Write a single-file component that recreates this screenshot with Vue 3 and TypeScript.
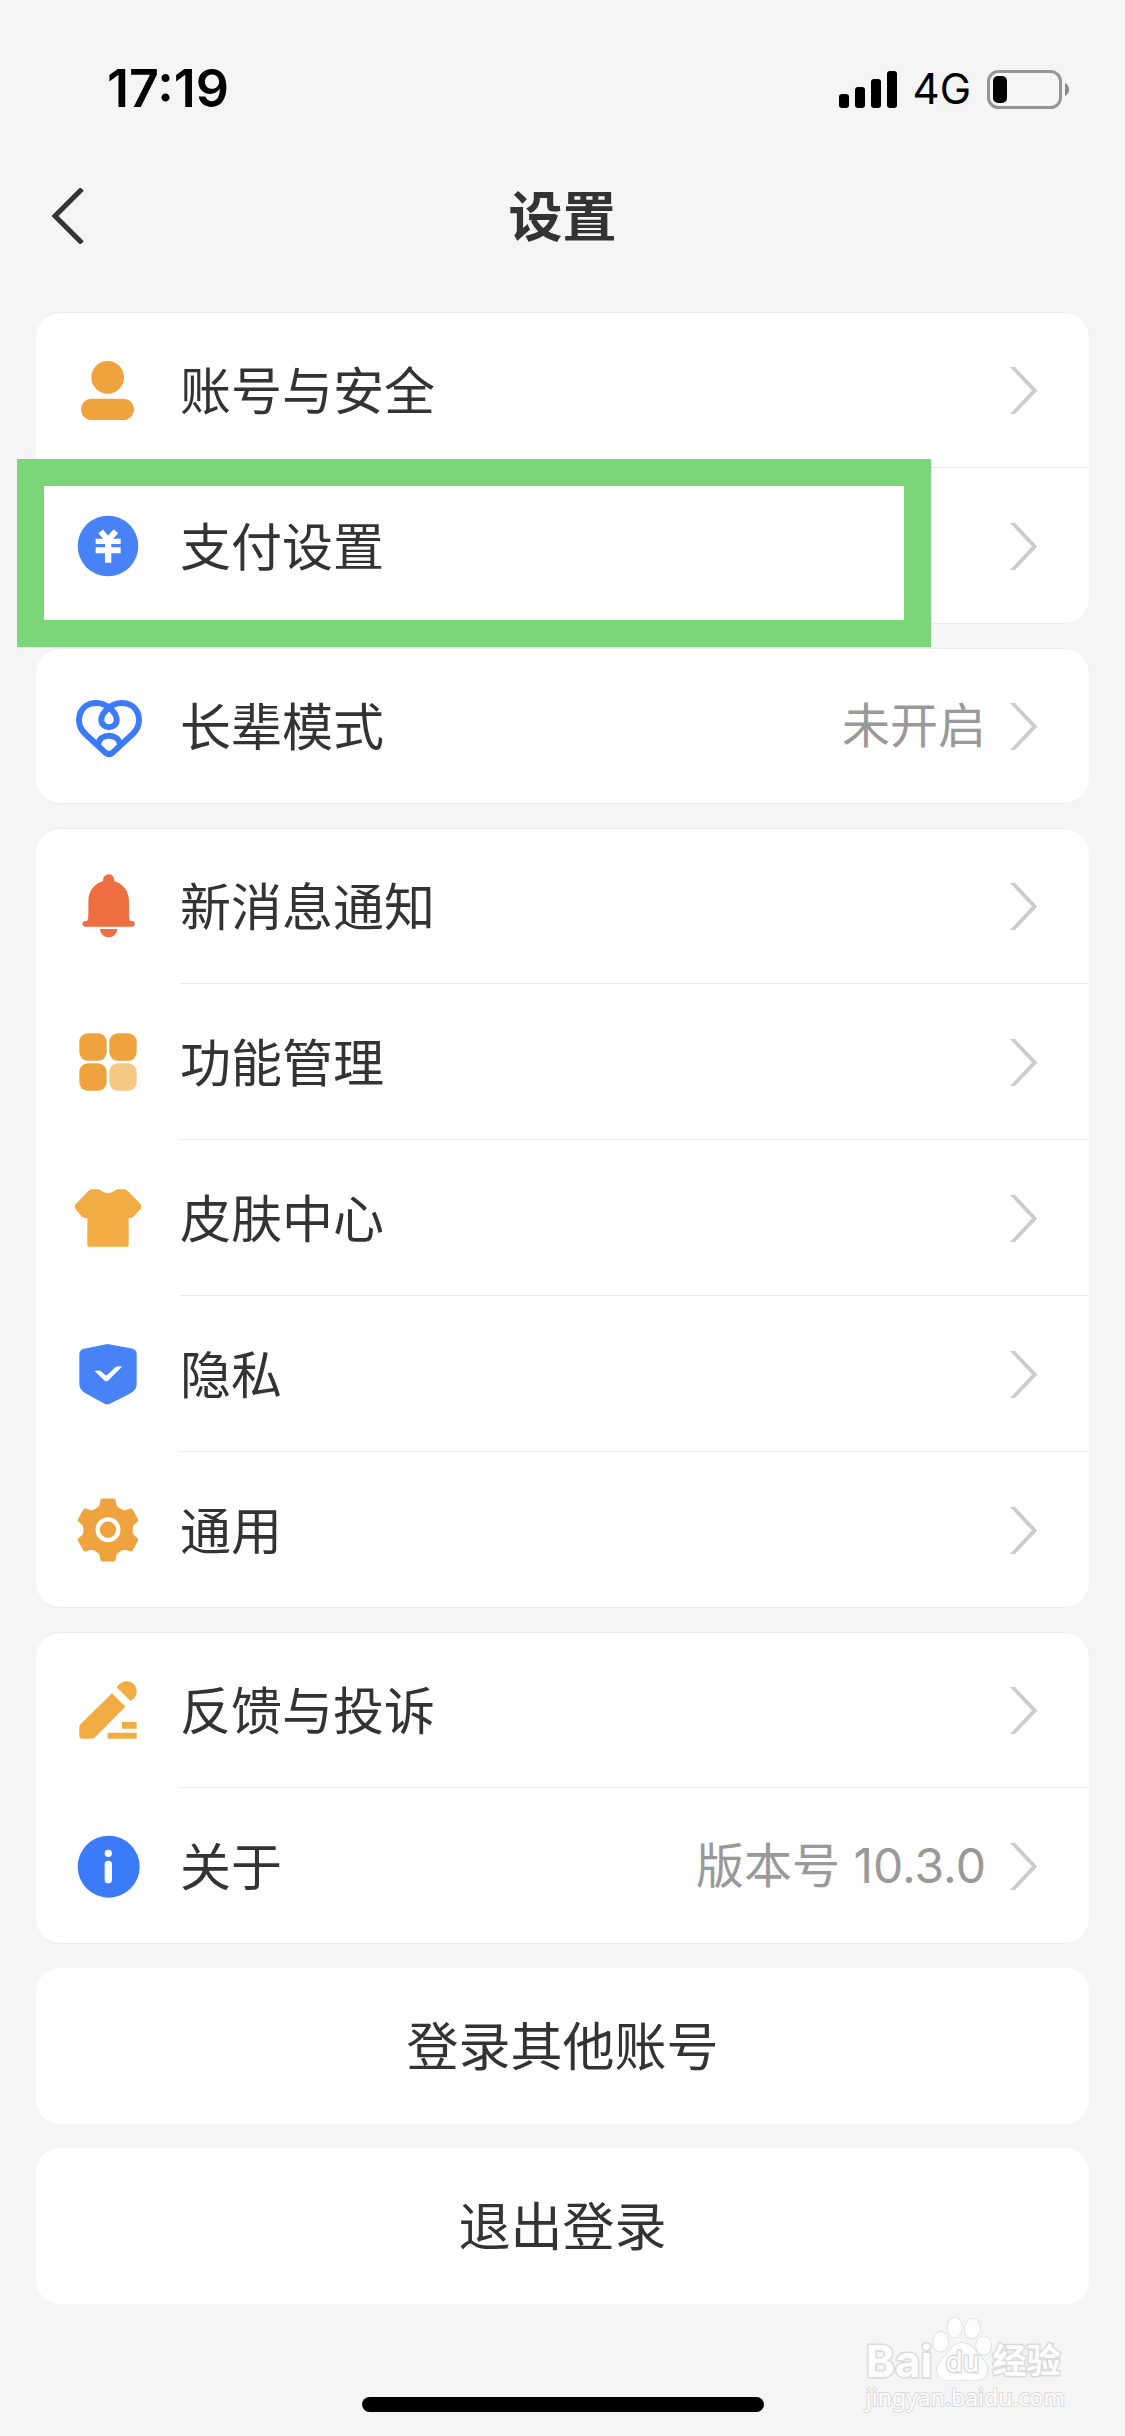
<script setup lang="ts">
interface Shape {
  d: string
  fill?: string
  stroke?: string
  width?: number
}

interface Item {
  id: string
  label: string
  icon: Shape[]
  value?: string
  marked?: boolean
}

const amber = '#eea33f'
const gold = '#f1ad43'
const blue = '#4782f6'
const brightBlue = '#3b7af8'
const orange = '#ee6f41'
const white = '#ffffff'

const circle = (cx: number, cy: number, r: number): string =>
  `M${cx - r} ${cy}a${r} ${r} 0 1 1 ${2 * r} 0a${r} ${r} 0 1 1 ${-2 * r} 0z`

const box = (x: number, y: number, w: number, h: number, r: number): string =>
  `M${x + r} ${y}h${w - 2 * r}a${r} ${r} 0 0 1 ${r} ${r}v${h - 2 * r}a${r} ${r} 0 0 1 ${-r} ${r}h${2 * r - w}a${r} ${r} 0 0 1 ${-r} ${-r}v${2 * r - h}a${r} ${r} 0 0 1 ${r} ${-r}z`

const spin = (points: [number, number][], cx: number, cy: number, deg: number): string => {
  const a = (deg * Math.PI) / 180
  return (
    'M' +
    points
      .map(([x, y]) => {
        const dx = x - cx
        const dy = y - cy
        return `${(cx + dx * Math.cos(a) - dy * Math.sin(a)).toFixed(1)} ${(cy + dx * Math.sin(a) + dy * Math.cos(a)).toFixed(1)}`
      })
      .join('L') +
    'z'
  )
}

const tooth: [number, number][] = [[80, 42], [85, 34], [88, 18], [92, 16], [124, 16], [128, 18], [131, 34], [136, 42], [108, 107]]
const gear = [0, 60, 120, 180, 240, 300].map((deg) => spin(tooth, 108, 108, deg)).join('')

const groups: Item[][] = [
  [
    {
      id: 'account',
      label: '账号与安全',
      icon: [
        { d: circle(107, 70, 49), fill: amber },
        { d: box(27, 134, 159, 64, 32), fill: amber },
      ],
    },
    {
      id: 'payment',
      label: '支付设置',
      marked: true,
      icon: [
        { d: circle(108, 108, 91), fill: blue },
        { d: 'M86 64L108 90L132 64', stroke: white, width: 18 },
        { d: 'M71 86H146V102H118V112H146V130H118V158H99V130H71V112H99V102H71Z', fill: white },
      ],
    },
  ],
  [
    {
      id: 'elder',
      label: '长辈模式',
      value: '未开启',
      icon: [
        {
          d: 'M100 188L40 132C6 100 18 39 74 39C104 39 134 68 134 90A23 22 0 0 1 88 90C88 68 118 39 148 39C204 39 216 100 182 132L122 188Q111 197 100 188Z',
          stroke: brightBlue,
          width: 18,
        },
        { d: 'M78 164C82 128 140 128 144 164', stroke: brightBlue, width: 18 },
      ],
    },
  ],
  [
    {
      id: 'notice',
      label: '新消息通知',
      icon: [
        {
          d: 'M93 34C92 6 128 6 127 34C152 40 171 62 171 94V134Q171 150 176 153H180A8 8 0 0 1 180 170H40A8 8 0 0 1 40 153H44Q49 150 49 134V94C49 62 68 40 93 34Z',
          fill: orange,
        },
        { d: 'M84 177H136A26 25 0 0 1 84 177Z', fill: orange },
      ],
    },
    {
      id: 'features',
      label: '功能管理',
      icon: [
        { d: box(22, 22, 82, 82, 26), fill: amber },
        { d: box(112, 22, 82, 82, 26), fill: amber },
        { d: box(22, 112, 82, 82, 26), fill: amber },
        { d: box(112, 112, 82, 82, 26), fill: '#f5c884' },
      ],
    },
    {
      id: 'skin',
      label: '皮肤中心',
      icon: [
        {
          d: 'M60 22H78Q84 22 89 27Q108 40 127 27Q132 22 138 22H156Q162 22 167 27L203 63Q211 72 206 81L184 104Q180 108 174 108H170V190Q170 194 166 194H50Q46 194 46 190V108H40Q34 108 30 104L11 82Q5 74 12 65L49 27Q54 22 60 22Z',
          fill: gold,
        },
      ],
    },
    {
      id: 'privacy',
      label: '隐私',
      icon: [
        {
          d: 'M106 18L176 31Q194 34 194 48V138Q194 156 176 166L114 197Q106 201 98 197L40 166Q22 155 22 138V48Q22 36 36 32Z',
          fill: blue,
        },
        { d: 'M68 99Q77 96 86 99L103 113L130 88Q138 83 150 86L111 125Q103 134 95 125Z', fill: white },
      ],
    },
    {
      id: 'general',
      label: '通用',
      icon: [
        { d: gear, fill: amber, stroke: amber, width: 5 },
        { d: 'M108 22L182 65V151L108 194L34 151V65Z', fill: amber },
        { d: circle(108, 107, 31), stroke: white, width: 13 },
      ],
    },
  ],
  [
    {
      id: 'feedback',
      label: '反馈与投诉',
      icon: [
        { d: 'M120 58L160 98L70 189Q65 194 58 194H30Q22 194 22 186V160Q22 154 26 150Z', fill: gold },
        { d: 'M134 40C156 8 196 22 194 54Q193 70 176 81Z', fill: gold },
        { d: 'M150 144H194V164H150ZM107 176H194V194H107Z', fill: gold },
      ],
    },
    {
      id: 'about',
      label: '关于',
      value: '版本号 10.3.0',
      icon: [
        { d: circle(110, 110, 93), fill: brightBlue },
        { d: circle(109, 70, 11), fill: white },
        { d: box(98, 92, 22, 68, 11), fill: white },
      ],
    },
  ],
]

const actions: string[] = ['登录其他账号', '退出登录']
</script>

<template>
  <div class="page">
    <div class="status">
      <span class="time">17:19</span>
      <div class="signals">
        <svg class="bars" viewBox="0 0 58 37" aria-hidden="true">
          <rect x="0" y="23" width="10" height="14" rx="3" />
          <rect x="16" y="16" width="10" height="21" rx="3" />
          <rect x="32" y="8" width="10" height="29" rx="3" />
          <rect x="48" y="0" width="10" height="37" rx="3" />
        </svg>
        <span class="network">4G</span>
        <svg class="battery" viewBox="0 0 82 39" aria-hidden="true">
          <rect x="1.5" y="1.5" width="72" height="36" rx="10" fill="none" stroke="#959595" stroke-width="3" />
          <rect x="6" y="6" width="14" height="27" rx="5" fill="#000" />
          <path d="M78 13Q82 15 82 19.500T78 26Z" fill="#8a8a8a" />
        </svg>
      </div>
    </div>

    <header class="header">
      <button class="back" type="button" aria-label="返回">
        <svg viewBox="0 0 33 56" aria-hidden="true">
          <path d="M31 1L4 28L31 55" fill="none" stroke="#333" stroke-width="5" />
        </svg>
      </button>
      <h1 class="title">设置</h1>
    </header>

    <main class="content">
      <ul v-for="(group, index) in groups" :key="index" class="card">
        <li v-for="item in group" :key="item.id" class="item">
          <a class="row" href="#">
            <svg class="icon" viewBox="0 0 216 216" aria-hidden="true">
              <path
                v-for="(shape, n) in item.icon"
                :key="n"
                :d="shape.d"
                :fill="shape.fill ?? 'none'"
                :stroke="shape.stroke ?? 'none'"
                :stroke-width="shape.width ?? 0"
                stroke-linejoin="round"
              />
            </svg>
            <span class="body">
              <span class="label">{{ item.label }}</span>
              <span v-if="item.value" class="value">{{ item.value }}</span>
              <svg class="chevron" viewBox="0 0 27 47" aria-hidden="true">
                <path d="M0 0H5L26 22Q28 23.500 26 25L5 47H0L22 23.500Z" fill="#ccc" />
              </svg>
            </span>
          </a>
          <span v-if="item.marked" class="mark"></span>
        </li>
      </ul>
      <button v-for="action in actions" :key="action" class="action" type="button">{{ action }}</button>
    </main>

    <footer class="footer">
      <div class="home"></div>
      <div class="watermark">
        <div class="brand">
          <span class="bai">Bai</span>
          <span class="paw">
            <svg viewBox="0 0 180 196" aria-hidden="true">
              <g fill="#fdfdfd" stroke="#d8d8d8" stroke-width="4">
                <ellipse cx="26" cy="76" rx="23" ry="30" />
                <ellipse cx="68" cy="33" rx="22" ry="30" />
                <ellipse cx="121" cy="37" rx="23" ry="30" transform="rotate(10 121 37)" />
                <ellipse cx="155" cy="88" rx="23" ry="28" />
                <path d="M90 80C118 80 126 100 142 118C160 136 172 152 164 172C156 196 126 194 90 190C54 194 24 196 17 172C10 150 24 134 40 118C56 100 62 80 90 80Z" />
              </g>
            </svg>
            <span class="du">du</span>
          </span>
          <span class="exp">经验</span>
        </div>
        <span class="site">jingyan.baidu.com</span>
      </div>
    </footer>
  </div>
</template>

<style>
body {
  margin: 0;
  background: #f5f5f5;
}
</style>

<style scoped>
.page {
  display: flex;
  flex-direction: column;
  min-height: 100vh;
  background: #f5f5f5;
  color: #333;
  font-family: "Noto Sans", "Noto Sans CJK SC", sans-serif;
}

.status {
  display: flex;
  align-items: center;
  justify-content: space-between;
  height: 62px;
  padding: 58px 56px 0 107px;
  color: #000;
  font-family: Inter, sans-serif;
}

.time {
  font-size: 52px;
  line-height: 60px;
  font-weight: 600;
}

.signals {
  display: flex;
  align-items: center;
}

.bars {
  width: 58px;
  height: 37px;
}

.network {
  margin: 0 16px;
  font-size: 42px;
  line-height: 60px;
  font-weight: 400;
}

.battery {
  width: 82px;
  height: 39px;
}

.header {
  position: relative;
  display: flex;
  align-items: center;
  justify-content: center;
  height: 144px;
  margin: 24px 0;
}

.back {
  position: absolute;
  left: 36px;
  display: flex;
  padding: 15px;
  border: 0;
  background: none;
}

.back svg {
  width: 33px;
  height: 56px;
}

.title {
  margin: 0;
  font-size: 54px;
  line-height: 72px;
  font-weight: 700;
}

.content {
  display: flex;
  flex-direction: column;
  gap: 24px;
  padding: 0 36px;
}

.card {
  margin: 0;
  padding: 0;
  border-radius: 24px;
  background: #fff;
  box-shadow: inset 0 1px #ececec, inset 0 -1px #ececec;
  list-style: none;
}

.item {
  position: relative;
}

.row {
  display: flex;
  align-items: center;
  height: 156px;
  padding-left: 36px;
  color: inherit;
  text-decoration: none;
}

.icon {
  flex: none;
  width: 72px;
  height: 72px;
  margin-right: 36px;
}

.body {
  display: flex;
  flex: 1;
  align-items: center;
  box-sizing: border-box;
  height: 156px;
  padding-right: 52px;
}

.item:not(:last-child) .body {
  box-shadow: inset 0 -1px #ececec;
}

.label {
  flex: 1;
  font-size: 51px;
  line-height: 72px;
}

.value {
  margin-right: 24px;
  color: #999;
  font-family: Inter, "Noto Sans CJK SC", sans-serif;
  font-size: 48px;
  line-height: 72px;
}

.chevron {
  width: 27px;
  height: 47px;
}

.mark {
  position: absolute;
  z-index: 1;
  top: -9px;
  right: 158px;
  bottom: -23px;
  left: -19px;
  border: 27px solid #7bd679;
  pointer-events: none;
}

.action {
  height: 156px;
  border: 0;
  border-radius: 24px;
  background: #fff;
  color: inherit;
  font: inherit;
  font-size: 52px;
  line-height: 72px;
}

.footer {
  position: relative;
  display: flex;
  flex: 1;
  align-items: flex-end;
  justify-content: center;
  min-height: 108px;
  padding-bottom: 24px;
}

.home {
  width: 402px;
  height: 15px;
  border-radius: 8px;
  background: #000;
}

.watermark {
  position: absolute;
  right: 60px;
  bottom: 24px;
  color: #fdfdfd;
  -webkit-text-stroke: 3px #dadada;
  paint-order: stroke fill;
}

.brand {
  display: flex;
  align-items: flex-end;
  font-family: Inter, "Noto Sans CJK SC", sans-serif;
}

.bai {
  font-size: 44px;
  line-height: 42px;
  font-weight: 700;
}

.paw {
  position: relative;
  width: 60px;
  height: 66px;
}

.paw svg {
  display: block;
  width: 60px;
  height: 66px;
}

.du {
  position: absolute;
  right: 0;
  bottom: 6px;
  left: 0;
  font-size: 28px;
  line-height: 28px;
  text-align: center;
}

.exp {
  font-size: 34px;
  line-height: 42px;
  font-weight: 700;
}

.site {
  display: block;
  font-size: 23px;
  line-height: 30px;
  -webkit-text-stroke-width: 2px;
}
</style>
